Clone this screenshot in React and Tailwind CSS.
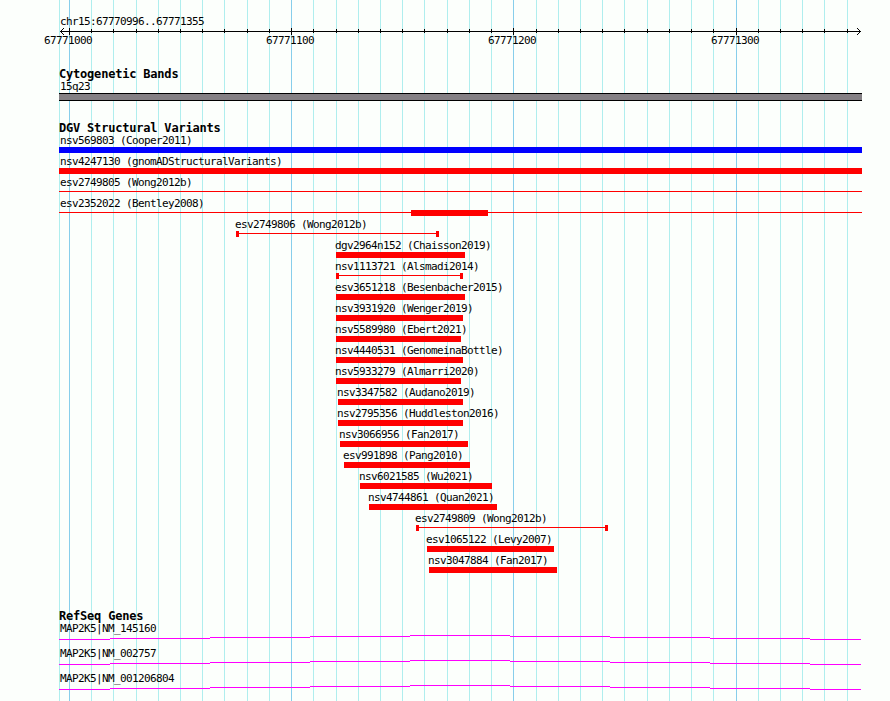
import React from 'react';

const REGION = { left: 59, right: 862 };

const minorLines = [
  59, 91, 113, 136, 158, 180, 202, 224, 247, 269, 313, 336, 358, 380, 402, 424, 447, 469, 491,
  536, 558, 580, 602, 624, 647, 669, 691, 713, 758, 780, 802, 824, 847,
];

const majorLines = [
  { x: 69, label: '67771000' },
  { x: 291, label: '67771100' },
  { x: 513, label: '67771200' },
  { x: 736, label: '67771300' },
];

// start and end are canvas x positions, thick is the filled part of a thin feature
const variants = [
  { name: 'nsv569803 (Cooper2011)', start: 59, end: 862, type: 'gain' },
  { name: 'nsv4247130 (gnomADStructuralVariants)', start: 59, end: 862, type: 'loss' },
  { name: 'esv2749805 (Wong2012b)', start: 59, end: 862, type: 'line' },
  { name: 'esv2352022 (Bentley2008)', start: 59, end: 862, type: 'line', thick: [411, 488] },
  { name: 'esv2749806 (Wong2012b)', start: 236, end: 439, type: 'span' },
  { name: 'dgv2964n152 (Chaisson2019)', start: 336, end: 465, type: 'loss' },
  { name: 'nsv1113721 (Alsmadi2014)', start: 336, end: 463, type: 'span' },
  { name: 'esv3651218 (Besenbacher2015)', start: 336, end: 465, type: 'loss' },
  { name: 'nsv3931920 (Wenger2019)', start: 336, end: 463, type: 'loss' },
  { name: 'nsv5589980 (Ebert2021)', start: 336, end: 461, type: 'loss' },
  { name: 'nsv4440531 (GenomeinaBottle)', start: 336, end: 463, type: 'loss' },
  { name: 'nsv5933279 (Almarri2020)', start: 336, end: 461, type: 'loss' },
  { name: 'nsv3347582 (Audano2019)', start: 338, end: 463, type: 'loss' },
  { name: 'nsv2795356 (Huddleston2016)', start: 338, end: 463, type: 'loss' },
  { name: 'nsv3066956 (Fan2017)', start: 340, end: 468, type: 'loss' },
  { name: 'esv991898 (Pang2010)', start: 344, end: 470, type: 'loss' },
  { name: 'nsv6021585 (Wu2021)', start: 360, end: 492, type: 'loss' },
  { name: 'nsv4744861 (Quan2021)', start: 369, end: 497, type: 'loss' },
  { name: 'esv2749809 (Wong2012b)', start: 416, end: 608, type: 'span' },
  { name: 'esv1065122 (Levy2007)', start: 427, end: 554, type: 'loss' },
  { name: 'nsv3047884 (Fan2017)', start: 429, end: 557, type: 'loss' },
];

const genes = ['MAP2K5|NM_145160', 'MAP2K5|NM_002757', 'MAP2K5|NM_001206804'];

// [x, width, y] of each piece of the intron line
const intron = [
  [0, 51, 4], [51, 100, 3], [151, 100, 2], [251, 100, 1], [351, 100, 0],
  [451, 100, 1], [551, 100, 2], [651, 100, 3], [751, 51, 4],
];

function Grid() {
  return (
    <svg className="absolute inset-0" width="890" height="701" shapeRendering="crispEdges">
      {minorLines.map((x) => (
        <rect key={x} x={x} y="0" width="1" height="701" fill="#afeeee" />
      ))}
      {majorLines.map(({ x }) => (
        <rect key={x} x={x} y="0" width="1" height="701" fill="#87ceeb" />
      ))}
    </svg>
  );
}

function Label({ children }) {
  return (
    <div className="h-[13px] whitespace-pre text-[11px] leading-[13px] tracking-[-0.622px]">
      {children}
    </div>
  );
}

function Heading({ children }) {
  return (
    <h2 className="h-[13px] whitespace-pre text-[12px] font-bold leading-[15px] tracking-[-0.2px]">
      {children}
    </h2>
  );
}

function Ruler() {
  return (
    <header className="pt-[15px] h-[67px]">
      <div className="pl-px"><Label>chr15:67770996..67771355</Label></div>
      <svg className="block" width="803" height="7" shapeRendering="crispEdges">
        <rect x="1" y="3" width="801" height="1" />
        {minorLines.slice(1).map((x) => (
          <rect key={x} x={x - REGION.left} y="1" width="1" height="4" />
        ))}
        {majorLines.map(({ x }) => (
          <rect key={x} x={x - REGION.left} y="0" width="1" height="7" />
        ))}
        <path d="M4 0h1v1h-1zM3 1h1v1h-1zM2 2h1v1h-1zM2 4h1v1h-1zM3 5h1v1h-1zM4 6h1v1h-1z" />
        <path d="M798 0h1v1h-1zM799 1h1v1h-1zM800 2h1v1h-1zM800 4h1v1h-1zM799 5h1v1h-1zM798 6h1v1h-1z" />
      </svg>
      <div className="-ml-[15px] -mt-px flex">
        {majorLines.map(({ x, label }, i) => (
          <div key={x} className={i === 2 ? 'w-[223px] shrink-0' : 'w-[222px] shrink-0'}>
            <Label>{label}</Label>
          </div>
        ))}
      </div>
    </header>
  );
}

function Glyph({ item }) {
  const width = item.end - item.start;
  if (item.type === 'gain') return <div className="h-[6px] bg-[#0000ff]" style={{ width }} />;
  if (item.type === 'loss') return <div className="h-[6px] bg-[#ff0000]" style={{ width }} />;
  return (
    <svg className="block" width={width} height="6" fill="#ff0000" shapeRendering="crispEdges">
      <rect x="0" y="2" width={width} height="1" />
      {item.thick && (
        <rect x={item.thick[0] - item.start} y="0" width={item.thick[1] - item.thick[0]} height="6" />
      )}
      {item.type === 'span' && (
        <>
          <rect x="0" y="0" width="3" height="6" />
          <rect x={width - 3} y="0" width="3" height="6" />
        </>
      )}
    </svg>
  );
}

function Variant({ item }) {
  return (
    <li className="h-[21px]" style={{ marginLeft: item.start - REGION.left }}>
      <div className={item.start === REGION.left ? 'ml-px' : '-ml-px'}>
        <Label>{item.name}</Label>
      </div>
      <Glyph item={item} />
    </li>
  );
}

function Gene({ name }) {
  return (
    <li className="h-[25px]">
      <div className="pl-px"><Label>{name}</Label></div>
      <svg className="block" width="803" height="5" fill="#ff00ff" shapeRendering="crispEdges">
        {intron.map(([x, w, y]) => (
          <rect key={x} x={x} y={y} width={w} height="1" />
        ))}
      </svg>
    </li>
  );
}

export default function App() {
  return (
    <div className="relative h-[701px] w-[890px] overflow-hidden bg-[#fcfffc] font-['DejaVu_Sans_Mono',monospace] text-black">
      <Grid />
      <main className="relative ml-[59px] w-[803px]">
        <Ruler />
        <section className="h-[54px]">
          <Heading>Cytogenetic Bands</Heading>
          <div className="pl-px"><Label>15q23</Label></div>
          <div className="h-[8px] border-y border-black bg-[#848084]" />
        </section>
        <section className="h-[488px]">
          <Heading>DGV Structural Variants</Heading>
          <ul>
            {variants.map((item) => <Variant key={item.name} item={item} />)}
          </ul>
        </section>
        <section>
          <Heading>RefSeq Genes</Heading>
          <ul>
            {genes.map((name) => <Gene key={name} name={name} />)}
          </ul>
        </section>
      </main>
    </div>
  );
}
